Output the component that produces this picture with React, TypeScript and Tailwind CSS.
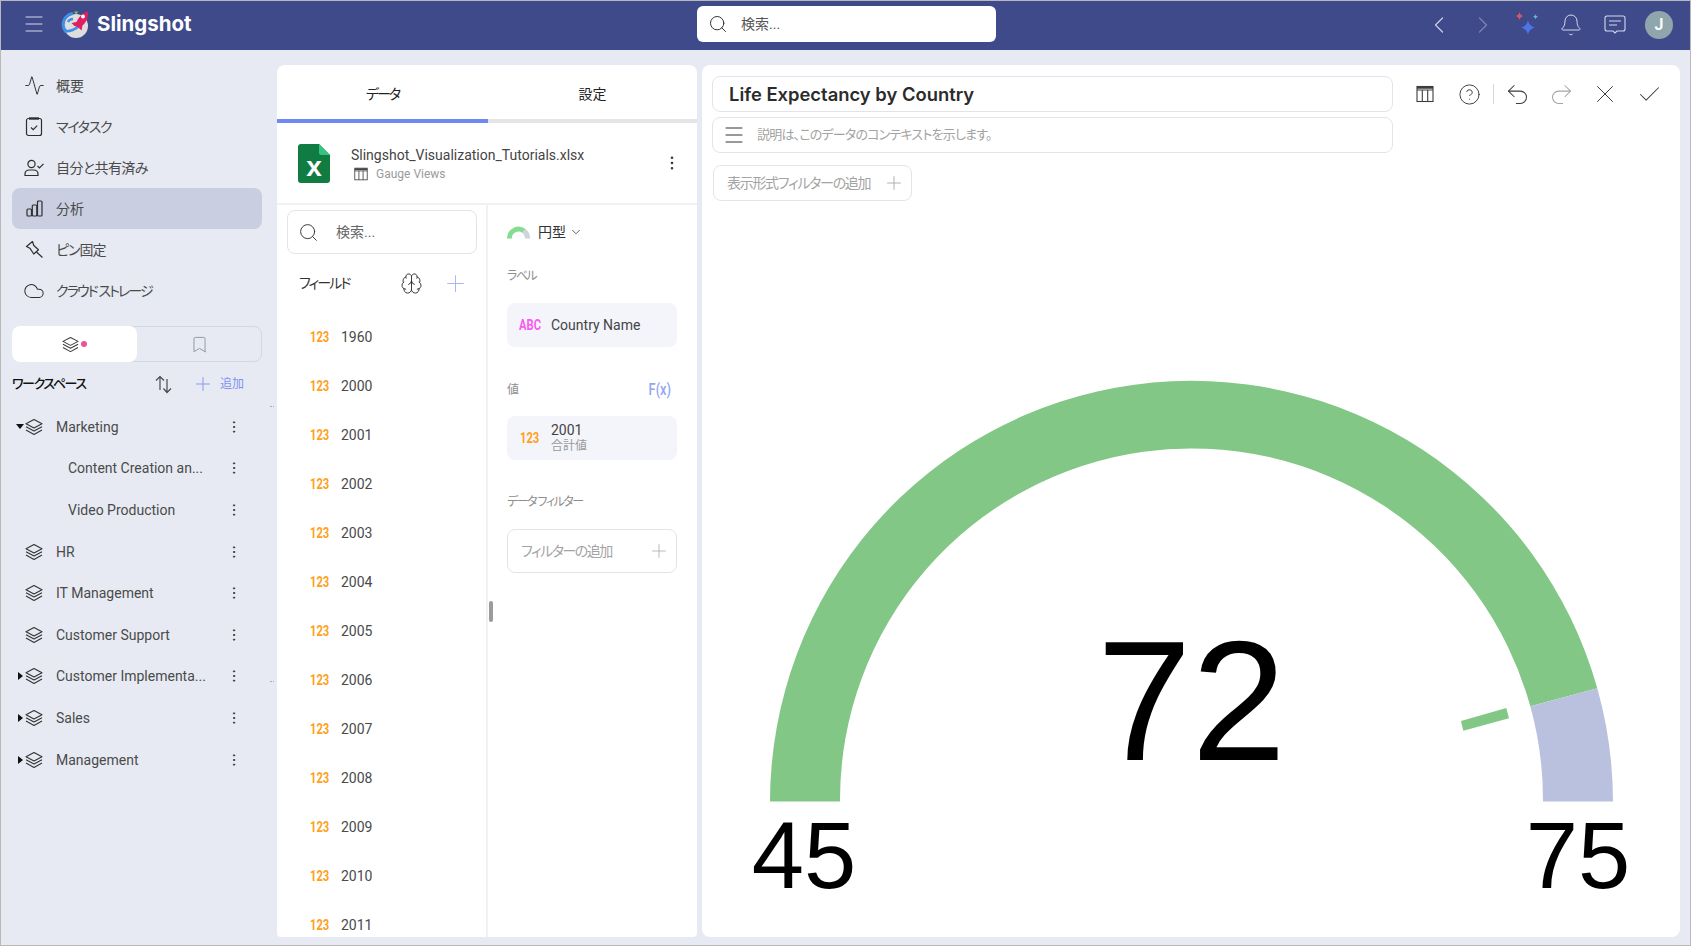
import {
  Activity,
  Bell,
  Bookmark,
  Brain,
  Check,
  ChevronDown,
  ChevronLeft,
  ChevronRight,
  CircleHelp,
  Cloud,
  EllipsisVertical,
  Menu,
  Plus,
  Redo2,
  Search,
  Undo2,
  X,
} from "lucide-react";

function Layers({ size = 18 }: { size?: number }) {
  return (
    <svg width={size} height={size} viewBox="0 0 18 18" fill="none" stroke="currentColor" strokeWidth="1.1" strokeLinejoin="round">
      <path d="M9 1.5 17 5.7 9 9.9 1 5.7Z" />
      <path d="M1 8.8 9 13 17 8.8" />
      <path d="M1 12.1 9 16.5 17 12.1" />
    </svg>
  );
}

function Clipboard() {
  return (
    <svg width="18" height="20" viewBox="0 0 18 20" fill="none" stroke="currentColor" strokeWidth="1.2">
      <rect x="1.5" y="1.5" width="15" height="17" rx="2" />
      <path d="M4 1.5h10" strokeWidth="2.4" />
      <path d="M6 10.5 8.2 12.7 12.2 8.6" />
    </svg>
  );
}

function UserCheck() {
  return (
    <svg width="20" height="18" viewBox="0 0 20 18" fill="none" stroke="currentColor" strokeWidth="1.2">
      <circle cx="7.5" cy="5" r="3.6" />
      <path d="M1 16.5v-1.5c0-2.5 2-4 4.500-4h4c2.500 0 4.500 1.500 4.500 4v1.500Z" />
      <path d="M13.500 7 15.500 9 19.500 4.800" />
    </svg>
  );
}

function Bars() {
  return (
    <svg width="17" height="17" viewBox="0 0 17 17" fill="none" stroke="currentColor" strokeWidth="1.2">
      <rect x="1" y="9" width="4.5" height="7" rx="1" />
      <rect x="6.300" y="5" width="4.500" height="11" rx="1" />
      <rect x="11.500" y="1" width="4.500" height="15" rx="1" />
    </svg>
  );
}

function PinIcon() {
  return (
    <svg width="19" height="19" viewBox="0 0 19 19" fill="none" stroke="currentColor" strokeWidth="1.2" strokeLinejoin="round">
      <path d="M7.500 1.500 1.500 6.500 4.800 8.200 8.800 14 13.500 9.800 8.800 5.500Z" />
      <path d="M11.500 12 17.500 17.500" />
    </svg>
  );
}

function SortIcon() {
  return (
    <svg width="19" height="19" viewBox="0 0 19 19" fill="none" stroke="currentColor" strokeWidth="1.2">
      <path d="M6 15V1.500M2 5.500 6 1.500 10 5.500" />
      <path d="M13 4v13.500M9.500 13.500 13 17.500 17 13.500" />
    </svg>
  );
}

function GridIcon({ size = 18 }: { size?: number }) {
  return (
    <svg width={size} height={size} viewBox="0 0 18 18" fill="none" stroke="currentColor" strokeWidth="1.1">
      <rect x="1" y="1.500" width="16" height="15" />
      <path d="M1 5h16M6.300 5v11.500M11.700 5v11.500" />
      <path d="M1 2.700h16" strokeWidth="2" />
    </svg>
  );
}

function Sparkles() {
  return (
    <svg width="26" height="28" viewBox="0 0 26 28">
      <path d="M14 9c.8 4 2.500 6.200 7 7.500-4.500 1.300-6.200 3.500-7 7.500-.8-4-2.500-6.200-7-7.500 4.500-1.300 6.200-3.500 7-7.500Z" fill="#4f74e8" />
      <path d="M5.500 1c.4 2 1.200 3 3.500 4-2.300 1-3.100 2-3.500 4-.4-2-1.200-3-3.500-4 2.300-1 3.100-2 3.500-4Z" fill="#e0565f" />
      <path d="M21.500 3c.3 1.500.9 2.200 2.500 2.800-1.600.6-2.200 1.300-2.500 2.800-.3-1.500-.9-2.200-2.500-2.800 1.600-.6 2.200-1.300 2.500-2.800Z" fill="#62b4ee" />
    </svg>
  );
}

function ChatIcon() {
  return (
    <svg width="22" height="20" viewBox="0 0 22 20" fill="none" stroke="currentColor" strokeWidth="1.1">
      <path d="M3 1h16a2 2 0 0 1 2 2v11a2 2 0 0 1-2 2h-6l-2 2-2-2H3a2 2 0 0 1-2-2V3a2 2 0 0 1 2-2Z" />
      <path d="M5 6h12M5 10h8" />
    </svg>
  );
}

function Logo() {
  return (
    <svg width="28" height="28" viewBox="0 0 28 28">
      <circle cx="15" cy="16" r="12" fill="#dedede" />
      <path d="M12 3.500A11 11 0 0 0 2.200 15c0 3.500 1.500 5.500 3.500 7" fill="none" stroke="#3f8fe8" strokeWidth="3" />
      <path d="M7 12c1-2 3-3 5-3M3 21c6 1 12-2 15-5" fill="none" stroke="#3f8fe8" strokeWidth="2.500" />
      <path d="M13 1.500h4.500L15 4.500Z" fill="#6fd05a" />
      <path d="M27 1.500c.5 6-1.500 10.500-5.500 14l-1 5-3.500-3.500-3.500-1-3-3 5-1C18.500 6 22 2.500 27 1.500Z" fill="#e01f5f" />
      <circle cx="22" cy="6.500" r="2" fill="#fff" />
    </svg>
  );
}

function ExcelIcon() {
  return (
    <svg width="32" height="39" viewBox="0 0 32 39">
      <path d="M3 0h18l11 11v25a3 3 0 0 1-3 3H3a3 3 0 0 1-3-3V3a3 3 0 0 1 3-3Z" fill="#107c41" />
      <path d="M21 0l11 11H23a2 2 0 0 1-2-2Z" fill="#33c481" />
      <text x="16" y="32" textAnchor="middle" fontFamily="Liberation Sans" fontWeight="700" fontSize="28" fill="#fff">x</text>
    </svg>
  );
}

function MiniGauge() {
  return (
    <svg width="23" height="13" viewBox="0 0 23 13" fill="none" strokeWidth="5">
      <path d="M2.500 12.500A9 9 0 0 1 17 5" stroke="#86dc90" />
      <path d="M17 5A9 9 0 0 1 20.500 12.500" stroke="#cfd3dc" />
    </svg>
  );
}

// narrow bold type tag in front of a field name
function TypeTag({ label, color, width }: { label: string; color: string; width: string }) {
  return (
    <span className={`shrink-0 inline-block origin-left scale-x-80 text-sm font-bold ${color} ${width}`}>{label}</span>
  );
}

// kana in the reference is set much tighter than Noto's, hence the tracking per label
const nav = [
  { label: "概要", track: "", icon: <Activity size={21} strokeWidth={1.1} /> },
  { label: "マイタスク", track: "tracking-[-1.3px]", icon: <Clipboard /> },
  { label: "自分と共有済み", track: "tracking-[-0.6px]", icon: <UserCheck /> },
  { label: "分析", track: "", icon: <Bars />, active: true },
  { label: "ピン固定", track: "tracking-[-1px]", icon: <PinIcon /> },
  { label: "クラウド ストレージ", track: "tracking-[-1.9px]", icon: <Cloud size={22} strokeWidth={1.1} /> },
];

const tree = [
  { label: "Marketing", caret: "down" },
  { label: "Content Creation an...", sub: true },
  { label: "Video Production", sub: true },
  { label: "HR" },
  { label: "IT Management" },
  { label: "Customer Support" },
  { label: "Customer Implementa...", caret: "right" },
  { label: "Sales", caret: "right" },
  { label: "Management", caret: "right" },
];

const years = ["1960", "2000", "2001", "2002", "2003", "2004", "2005", "2006", "2007", "2008", "2009", "2010", "2011"];

export default function App() {
  return (
    <div className="w-[1691px] h-[946px] overflow-hidden flex flex-col border border-[#b9b9b9] bg-[#e7eaf3] font-[Roboto,'Noto_Sans_CJK_JP',sans-serif] [font-feature-settings:'palt'] text-[#3d3d3d]">
      {/* Header */}
      <header className="h-[49px] shrink-0 flex items-center bg-[#3e4a8a] text-white">
        <div className="w-[696px] flex items-center pl-[21px] pb-[3px]">
          <Menu size={24} strokeWidth={1} className="text-[#d5d9ea]" />
          <div className="ml-[15px]">
            <Logo />
          </div>
          <span className="ml-[8px] text-[20.5px] font-bold font-[Inter,sans-serif]">Slingshot</span>
        </div>
        <div className="w-[299px] h-[36px] mb-[3px] flex items-center bg-white rounded-md pl-[11px] text-[#555]">
          <Search size={20} strokeWidth={1.2} className="text-[#333]" />
          <span className="ml-[13px] text-sm">検索...</span>
        </div>
        <div className="flex-1 flex items-center justify-end pr-[9px] pb-[2px]">
          <div className="w-[44px] flex justify-center text-[#c8cde4]">
            <ChevronLeft size={28} strokeWidth={1.1} />
          </div>
          <div className="w-[44px] flex justify-center text-[#7a84b4]">
            <ChevronRight size={28} strokeWidth={1.1} />
          </div>
          <div className="w-[44px] flex justify-center">
            <Sparkles />
          </div>
          <div className="w-[44px] flex justify-center text-[#d5d9ea]">
            <Bell size={24} strokeWidth={1} />
          </div>
          <div className="w-[44px] flex justify-center items-center text-[#d5d9ea]">
            <ChatIcon />
          </div>
          <div className="w-[44px] flex justify-center">
            <div className="w-[28px] h-[28px] rounded-full bg-[#8fa6ad] flex items-center justify-center text-base font-semibold">J</div>
          </div>
        </div>
      </header>

      <div className="flex-1 min-h-0 flex">
        {/* Sidebar */}
        <aside className="relative w-[276px] shrink-0 pt-[15px] pl-[11px] pr-[15px]">
          {nav.map((n) => (
            <div
              key={n.label}
              className={`h-[41px] flex items-center rounded-lg text-sm text-[#4a4a4a] ${n.active ? "bg-[#c9cfe1]" : ""}`}
            >
              <span className="w-[44px] flex justify-center text-[#2e2e2e]">{n.icon}</span>
              <span className={n.track}>{n.label}</span>
            </div>
          ))}

          <div className="mt-[15px] h-[36px] flex rounded-lg border border-[#d3d7e1]">
            <div className="w-[125px] -m-px mr-0 bg-white rounded-lg flex items-center justify-center gap-[2px] text-[#3d3d3d]">
              <Layers size={17} />
              <span className="w-[6px] h-[6px] rounded-full bg-[#e8559a]" />
            </div>
            <div className="flex-1 flex items-center justify-center text-[#8b8f99]">
              <Bookmark size={19} strokeWidth={1.1} />
            </div>
          </div>

          <div className="h-[44px] flex items-center">
            <span className="w-[142px] text-[13px] font-medium text-[#111] tracking-[-1.4px]">ワークスペース</span>
            <span className="text-[#4a4a4a]">
              <SortIcon />
            </span>
            <Plus size={22} strokeWidth={1} className="ml-[19px] text-[#7f94f0]" />
            <span className="ml-[6px] text-xs text-[#7f94f0]">追加</span>
          </div>

          <div>
            {tree.map((t) => (
              <div key={t.label} className="h-[41.6px] flex items-center text-sm text-[#4a4a4a]">
                <span className="w-[2px]" />
                <span className="w-[12px] flex justify-center">
                  {t.caret === "down" && <span className="w-0 h-0 border-x-[4px] border-x-transparent border-t-[5px] border-t-[#111]" />}
                  {t.caret === "right" && <span className="w-0 h-0 border-y-[4px] border-y-transparent border-l-[5px] border-l-[#111]" />}
                </span>
                {t.sub ? (
                  <span className="w-[28px]" />
                ) : (
                  <span className="w-[30px] flex -ml-[1px] text-[#333]">
                    <Layers />
                  </span>
                )}
                <span className={`flex-1 whitespace-nowrap ${t.sub ? "ml-[14px]" : "ml-[1px]"}`}>{t.label}</span>
                <EllipsisVertical size={16} strokeWidth={1.5} className="mr-[20px] text-[#333]" />
              </div>
            ))}
          </div>

          {/* column resize grips */}
          <span className="absolute right-[3px] top-[356px] w-[4px] h-px border-t border-dotted border-[#a5a8b3]" />
          <span className="absolute right-[3px] top-[631px] w-[4px] h-px border-t border-dotted border-[#a5a8b3]" />
        </aside>

        {/* Data panel */}
        <section className="relative w-[420px] shrink-0 mt-[15px] mb-[8px] bg-white rounded-t-lg rounded-b-sm flex flex-col overflow-hidden">
          <div className="h-[54px] shrink-0 pt-[3px] flex text-sm text-[#222]">
            <div className="w-[211px] flex items-center justify-center tracking-[-2px]">データ</div>
            <div className="flex-1 flex items-center justify-center">設定</div>
          </div>
          <div className="h-[4px] shrink-0 flex bg-[#e5e5e5]">
            <div className="w-[211px] bg-[#6e8af0]" />
          </div>

          <div className="h-[80px] shrink-0 flex items-center pl-[21px] pr-[16px]">
            <ExcelIcon />
            <div className="ml-[21px] flex-1">
              <div className="text-sm text-[#444] leading-[20px]">Slingshot_Visualization_Tutorials.xlsx</div>
              <div className="flex items-center text-xs text-[#9a9a9a] leading-[16px] mt-[1px]">
                <span className="ml-[3px] text-[#444]">
                  <GridIcon size={14} />
                </span>
                <span className="ml-[8px]">Gauge Views</span>
              </div>
            </div>
            <EllipsisVertical size={18} strokeWidth={1.5} className="text-[#333]" />
          </div>

          <div className="flex-1 min-h-0 flex border-t-2 border-[#f0f1f5]">
            {/* Fields column */}
            <div className="w-[211px] shrink-0 border-r-2 border-[#f0f1f5] flex flex-col overflow-hidden">
              <div className="mt-[5px] ml-[10px] mr-[9px] h-[44px] shrink-0 flex items-center border border-[#e3e4e9] rounded-lg pl-[10px] text-[#666]">
                <Search size={21} strokeWidth={1.1} className="text-[#333]" />
                <span className="ml-[17px] text-sm">検索...</span>
              </div>
              <div className="h-[58px] shrink-0 flex items-center pl-[22px] text-sm text-[#333]">
                <span className="w-[101px] tracking-[-1.9px]">フィールド</span>
                <Brain size={23} strokeWidth={1} className="text-[#333]" />
                <Plus size={27} strokeWidth={0.9} className="ml-[19px] text-[#a9b8f5]" />
              </div>
              {years.map((y) => (
                <div key={y} className="h-[49px] shrink-0 flex items-center pl-[33px] text-sm text-[#4a4a4a]">
                  <TypeTag label="123" color="text-[#ff9f1c]" width="w-[31px]" />
                  <span>{y}</span>
                </div>
              ))}
            </div>

            {/* Config column */}
            <div className="flex-1 pl-[19px] pr-[20px]">
              <div className="h-[54px] flex items-center text-sm text-[#333]">
                <MiniGauge />
                <span className="ml-[8px]">円型</span>
                <ChevronDown size={14} strokeWidth={1.3} className="ml-[3px]" />
              </div>
              <div className="h-[34px] flex items-center text-xs text-[#8d8d8d] tracking-[-1.6px]">ラベル</div>
              <div className="mt-[10px] h-[44px] flex items-center bg-[#f4f5fa] rounded-lg pl-[12px] text-sm text-[#444]">
                <TypeTag label="ABC" color="text-[#f85cf0]" width="w-[32px]" />
                Country Name
              </div>
              <div className="mt-[31px] h-[24px] flex items-center justify-between text-xs text-[#8d8d8d]">
                <span>値</span>
                <span className="mr-[6px] mb-[1px] origin-right scale-x-80 text-base font-medium text-[#92a5f5]">F(x)</span>
              </div>
              <div className="mt-[14px] h-[44px] flex items-center bg-[#f4f5fa] rounded-lg pl-[13px]">
                <TypeTag label="123" color="text-[#ff9f1c]" width="w-[31px]" />
                <div>
                  <div className="text-sm leading-[15px] text-[#444]">2001</div>
                  <div className="mt-[1px] text-xs leading-[15px] text-[#9a9a9a]">合計値</div>
                </div>
              </div>
              <div className="mt-[30px] h-[24px] flex items-center text-xs text-[#8d8d8d] tracking-[-1.5px]">データ フィルター</div>
              <div className="mt-[15px] h-[44px] flex items-center justify-between border border-[#e3e4e9] rounded-lg pl-[13px] pr-[6px] text-sm text-[#a3a3a3]">
                <span className="tracking-[-1.5px]">フィルターの追加</span>
                <Plus size={22} strokeWidth={1} className="text-[#b5b5b5]" />
              </div>
            </div>
          </div>

          {/* splitter handle */}
          <span className="absolute left-[212px] top-[536px] w-[4px] h-[21px] rounded-sm bg-[#9b9b9b]" />
        </section>

        {/* Visualization panel */}
        <section className="ml-[5px] w-[978px] shrink-0 mt-[15px] mb-[8px] bg-white rounded-t-lg rounded-b-lg flex flex-col overflow-hidden">
          <div className="pt-[11px] pl-[10px] flex items-start">
            <div className="w-[681px]">
              <div className="h-[36px] pt-[1px] flex items-center border border-[#e3e4e9] rounded-lg pl-[16px] text-[18.4px] font-semibold font-[Inter,sans-serif] text-[#2b2b2b]">
                Life Expectancy by Country
              </div>
              <div className="mt-[5px] h-[36px] flex items-center border border-[#e3e4e9] rounded-lg pl-[9px] text-[13px] text-[#a3a3a3]">
                <Menu size={24} strokeWidth={1} className="text-[#333]" />
                <span className="ml-[11px] tracking-[-0.8px]">説明は、このデータのコンテキストを示します。</span>
              </div>
            </div>
            <div className="ml-[10px] h-[36px] flex items-center text-[#3d3d3d]">
              <div className="w-[44px] flex justify-center">
                <GridIcon />
              </div>
              <div className="w-[44px] flex justify-center">
                <CircleHelp size={23} strokeWidth={1} />
              </div>
              <div className="w-[4px] flex justify-center">
                <span className="w-px h-[20px] bg-[#d8d8d8]" />
              </div>
              <div className="w-[44px] flex justify-center">
                <Undo2 size={27} strokeWidth={0.9} />
              </div>
              <div className="w-[44px] flex justify-center text-[#a5a5a5]">
                <Redo2 size={27} strokeWidth={0.9} />
              </div>
              <div className="w-[44px] flex justify-center">
                <X size={30} strokeWidth={0.8} />
              </div>
              <div className="w-[44px] flex justify-center">
                <Check size={27} strokeWidth={0.9} />
              </div>
            </div>
          </div>

          <div className="mt-[12px] ml-[11px] w-[199px] h-[36px] shrink-0 flex items-center justify-between border border-[#e3e4e9] rounded-lg pl-[13px] pr-[6px] text-sm text-[#a3a3a3]">
            <span className="whitespace-nowrap tracking-[-1.3px]">表示形式フィルターの追加</span>
            <Plus size={22} strokeWidth={1} className="text-[#a8a8a8]" />
          </div>

          {/* Gauge */}
          <svg className="flex-1 min-h-0 w-full" viewBox="702 201 978 735" preserveAspectRatio="xMinYMin meet">
            <path d="M770 801.500A421.500 421.500 0 0 1 1597.300 688.300L1530.300 706.300A351.500 351.500 0 0 0 840 801.500Z" fill="#82c785" />
            <path d="M1597.300 688.300A421.500 421.500 0 0 1 1613 801.500H1543A351.500 351.500 0 0 0 1530.300 706.300Z" fill="#b9c1de" />
            <path d="M1461 721 1506.300 708 1509 718.300 1463.300 730.700Z" fill="#82c785" />
            <g fontFamily="Liberation Sans" fill="#000" textAnchor="middle">
              <text x="1191.500" y="760" fontSize="170">72</text>
              <text x="804" y="888" fontSize="94">45</text>
              <text x="1578" y="888" fontSize="94">75</text>
            </g>
          </svg>
        </section>
      </div>
    </div>
  );
}
